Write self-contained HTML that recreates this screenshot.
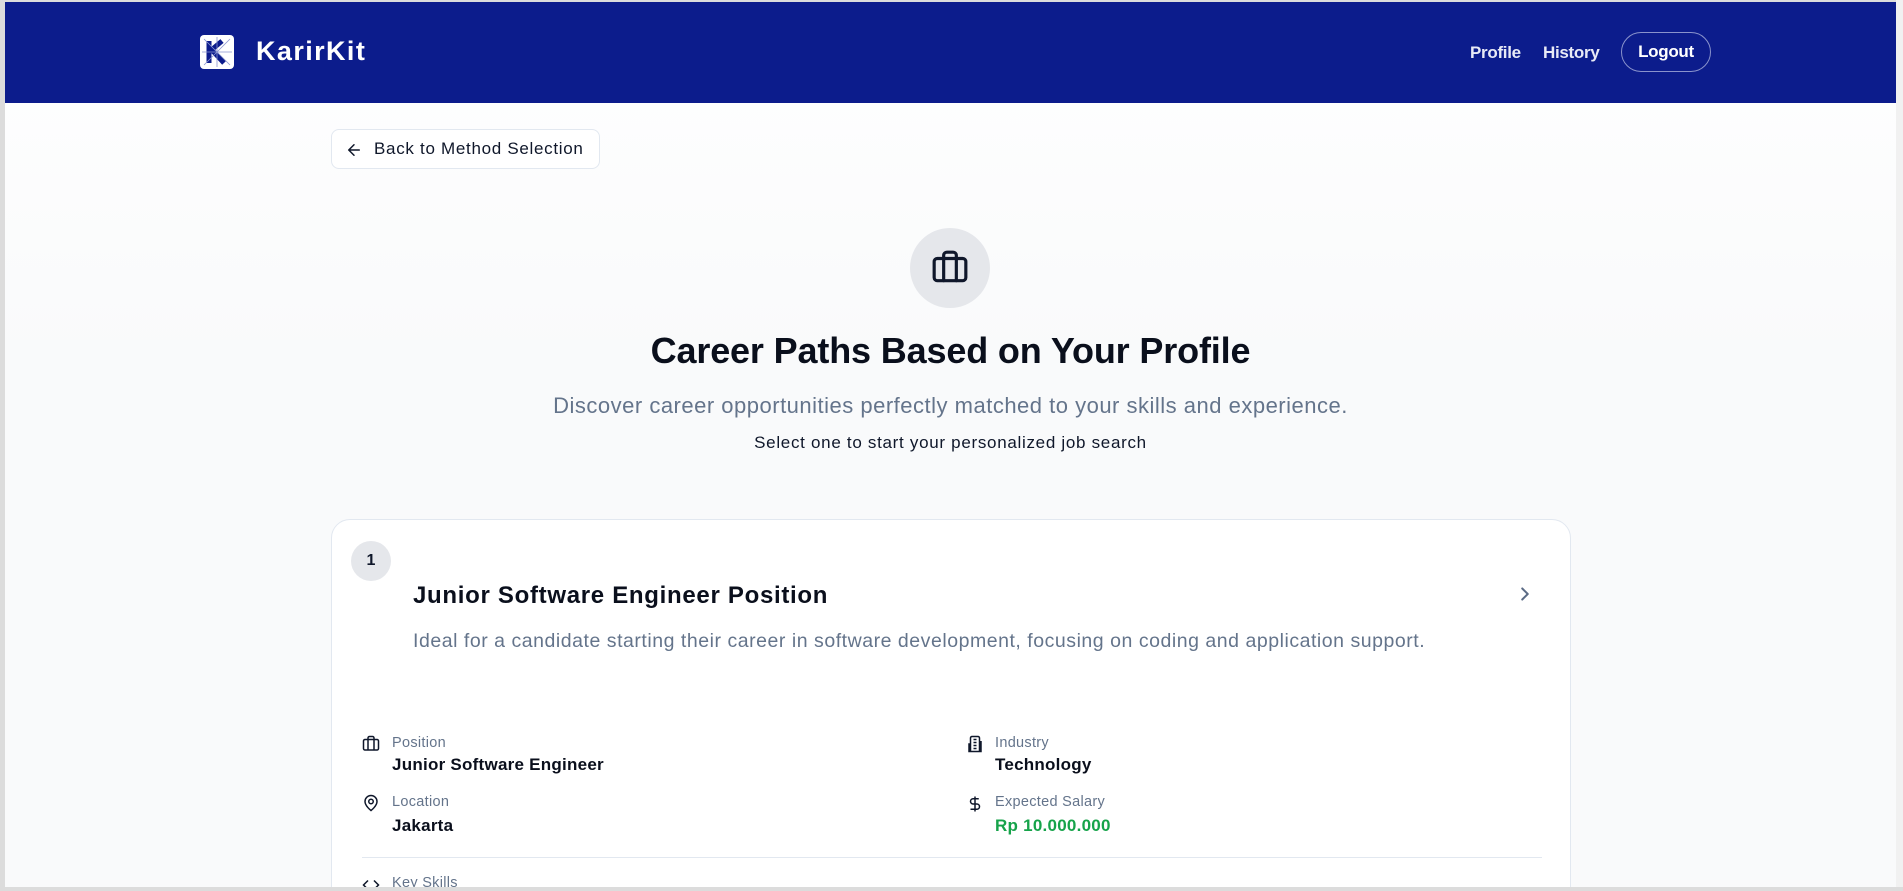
<!DOCTYPE html>
<html><head><meta charset="utf-8"><style>
*{box-sizing:border-box;margin:0;padding:0}
html,body{width:1903px;height:891px;overflow:hidden;background:#dcdcdc;font-family:"Liberation Sans",sans-serif;position:relative}
.page{position:absolute;left:5px;top:2px;width:1891px;height:885px;background:linear-gradient(#fff,#f9fafb 40%);overflow:hidden}
.nav{position:absolute;left:0;top:0;width:1891px;height:101px;background:#0c1c8c}
.abs{position:absolute}
.sb{position:absolute;left:1896px;top:0;width:7px;height:891px;background:#f1f1f1}
</style></head><body>
<div class="page">
<div class="nav">
 <div class="abs" style="left:195px;top:33px;width:34px;height:34px;background:#fff;border-radius:4px">
  <svg width="34" height="34" viewBox="0 0 34 34"><path d="M9 6v22M9 17L22 6M12 15l12 13" stroke="#0c1c8c" stroke-width="5" fill="none"/><g stroke="#8a95d0" stroke-width="0.8"><path d="M4 4L30 30M30 4L4 30M17 2v30M2 17h30"/></g></svg>
 </div>
 <div class="abs" style="left:251px;top:34px;color:#fff;font-weight:bold;font-size:27px;letter-spacing:1.4px">KarirKit</div>
 <div class="abs" style="left:1465px;top:41px;color:#e8eaf6;font-size:17px;font-weight:bold;letter-spacing:-0.3px">Profile</div>
 <div class="abs" style="left:1538px;top:41px;color:#e8eaf6;font-size:17px;font-weight:bold;letter-spacing:-0.3px">History</div>
 <div class="abs" style="left:1616px;top:30px;width:90px;height:40px;border:1px solid #8a93cc;border-radius:20px;color:#fff;font-size:17px;font-weight:bold;text-align:center;line-height:38px;letter-spacing:-0.3px">Logout</div>
</div>
<div class="abs" style="left:326px;top:127px;width:269px;height:40px;background:#fff;border:1px solid #e2e8f0;border-radius:8px;font-size:17px;color:#0f172a;line-height:38px;padding-left:42px;letter-spacing:0.7px">
 <svg class="abs" style="left:13px;top:11px" width="18" height="18" viewBox="0 0 24 24" fill="none" stroke="#0f172a" stroke-width="2" stroke-linecap="round" stroke-linejoin="round"><path d="M19 12H5M12 19l-7-7 7-7"/></svg>Back to Method Selection</div>
<div class="abs" style="left:905px;top:226px;width:80px;height:80px;border-radius:50%;background:#e5e7eb">
 <svg class="abs" style="left:21px;top:21px" width="38" height="38" viewBox="0 0 24 24" fill="none" stroke="#0f172a" stroke-width="2" stroke-linecap="round" stroke-linejoin="round"><path d="M16 20V4a2 2 0 0 0-2-2h-4a2 2 0 0 0-2 2v16"/><rect x="2" y="6" width="20" height="14" rx="2"/></svg>
</div>
<div class="abs" style="left:0;width:1891px;top:328px;text-align:center;font-size:36px;font-weight:bold;color:#0a0f1c;letter-spacing:-0.15px">Career Paths Based on Your Profile</div>
<div class="abs" style="left:0;width:1891px;top:391px;text-align:center;font-size:22px;color:#64748b;letter-spacing:0.5px">Discover career opportunities perfectly matched to your skills and experience.</div>
<div class="abs" style="left:0;width:1891px;top:431px;text-align:center;font-size:17px;color:#0f172a;letter-spacing:0.7px">Select one to start your personalized job search</div>
<div class="abs" style="left:326px;top:517px;width:1240px;height:400px;background:#fff;border:1px solid #e2e8f0;border-radius:19px">
 <div class="abs" style="left:19px;top:21px;width:40px;height:40px;border-radius:50%;background:#e5e7eb;text-align:center;line-height:40px;font-weight:bold;font-size:16px;color:#0f172a">1</div>
 <div class="abs" style="left:81px;top:62px;font-size:24px;font-weight:bold;color:#0a0f1c;letter-spacing:0.7px">Junior Software Engineer Position</div>
 <svg class="abs" style="left:1182px;top:63px" width="22" height="22" viewBox="0 0 24 24" fill="none" stroke="#5b6b85" stroke-width="2.2" stroke-linecap="round" stroke-linejoin="round"><path d="M9 18l6-6-6-6"/></svg>
 <div class="abs" style="left:81px;top:110px;font-size:19.5px;color:#64748b;letter-spacing:0.53px">Ideal for a candidate starting their career in software development, focusing on coding and application support.</div>
 <svg class="abs" style="left:30px;top:215px" width="18" height="18" viewBox="0 0 24 24" fill="none" stroke="#0f172a" stroke-width="2"><path d="M16 20V4a2 2 0 0 0-2-2h-4a2 2 0 0 0-2 2v16"/><rect x="2" y="6" width="20" height="14" rx="2"/></svg>
 <div class="abs" style="left:60px;top:215px;font-size:14.5px;color:#64748b;letter-spacing:0.3px">Position</div>
 <div class="abs" style="left:60px;top:235px;font-size:17px;font-weight:bold;color:#0a0f1c;letter-spacing:0.25px">Junior Software Engineer</div>
 <svg class="abs" style="left:30px;top:274px" width="18" height="18" viewBox="0 0 24 24" fill="none" stroke="#0f172a" stroke-width="2"><path d="M20 10c0 6-8 12-8 12s-8-6-8-12a8 8 0 0 1 16 0z"/><circle cx="12" cy="10" r="3"/></svg>
 <div class="abs" style="left:60px;top:274px;font-size:14.5px;color:#64748b;letter-spacing:0.3px">Location</div>
 <div class="abs" style="left:60px;top:296px;font-size:17px;font-weight:bold;color:#0a0f1c;letter-spacing:0.25px">Jakarta</div>
 <svg class="abs" style="left:634px;top:215px" width="18" height="18" viewBox="0 0 24 24" fill="none" stroke="#0f172a" stroke-width="2"><path d="M6 22V4a2 2 0 0 1 2-2h8a2 2 0 0 1 2 2v18zM6 12H4v10h16V9h-2M10 6h4M10 10h4M10 14h4M10 18h4"/></svg>
 <div class="abs" style="left:663px;top:215px;font-size:14.5px;color:#64748b;letter-spacing:0.3px">Industry</div>
 <div class="abs" style="left:663px;top:235px;font-size:17px;font-weight:bold;color:#0a0f1c;letter-spacing:0.25px">Technology</div>
 <svg class="abs" style="left:634px;top:274px" width="18" height="20" viewBox="0 0 24 24" fill="none" stroke="#0f172a" stroke-width="2"><path d="M12 2v20M17 5H9.5a3.5 3.5 0 0 0 0 7h5a3.5 3.5 0 0 1 0 7H6"/></svg>
 <div class="abs" style="left:663px;top:274px;font-size:14.5px;color:#64748b;letter-spacing:0.3px">Expected Salary</div>
 <div class="abs" style="left:663px;top:296px;font-size:17px;font-weight:bold;color:#16a34a;letter-spacing:0.25px">Rp 10.000.000</div>
 <div class="abs" style="left:30px;top:337px;width:1180px;height:1px;background:#e2e8f0"></div>
 <svg class="abs" style="left:30px;top:356px" width="18" height="18" viewBox="0 0 24 24" fill="none" stroke="#0f172a" stroke-width="2"><path d="M16 18l6-6-6-6M8 6l-6 6 6 6"/></svg>
 <div class="abs" style="left:60px;top:355px;font-size:14.5px;color:#64748b;letter-spacing:0.3px">Key Skills</div>
</div>
</div>
<div class="sb"></div>
<div class="abs" style="left:0;top:887px;width:1903px;height:4px;background:#dcdcdc"></div>
</body></html>
